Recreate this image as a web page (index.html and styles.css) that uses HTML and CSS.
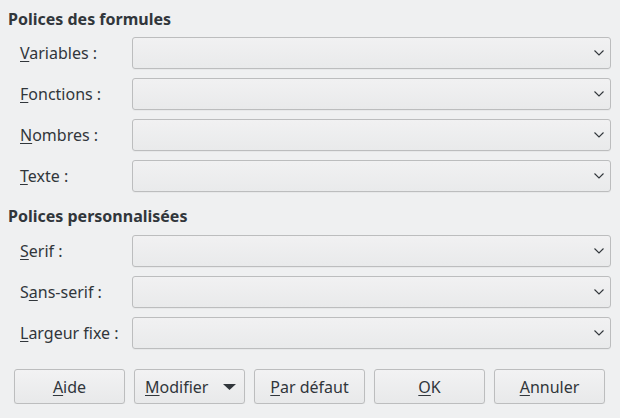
FILE: index.html
```html
<!DOCTYPE html>
<html lang="fr">
<head>
<meta charset="utf-8">
<title>Polices</title>
<link rel="stylesheet" href="styles.css">
</head>
<body>
<div class="dialog">
  <section class="section">
    <h2 class="heading">Polices des formules</h2>
    <div class="rows">
      <label class="label"><u>V</u>ariables :</label>
      <div class="combo"><svg class="chev" width="10" height="6" viewBox="0 0 10 6"><polyline points="0.5,0.5 5,5 9.5,0.5" fill="none" stroke="#31363b" stroke-width="1.1"/></svg></div>
      <label class="label"><u>F</u>onctions :</label>
      <div class="combo"><svg class="chev" width="10" height="6" viewBox="0 0 10 6"><polyline points="0.5,0.5 5,5 9.5,0.5" fill="none" stroke="#31363b" stroke-width="1.1"/></svg></div>
      <label class="label"><u>N</u>ombres :</label>
      <div class="combo"><svg class="chev" width="10" height="6" viewBox="0 0 10 6"><polyline points="0.5,0.5 5,5 9.5,0.5" fill="none" stroke="#31363b" stroke-width="1.1"/></svg></div>
      <label class="label"><u>T</u>exte :</label>
      <div class="combo"><svg class="chev" width="10" height="6" viewBox="0 0 10 6"><polyline points="0.5,0.5 5,5 9.5,0.5" fill="none" stroke="#31363b" stroke-width="1.1"/></svg></div>
    </div>
  </section>
  <section class="section section-second">
    <h2 class="heading">Polices personnalisées</h2>
    <div class="rows">
      <label class="label"><u>S</u>erif :</label>
      <div class="combo"><svg class="chev" width="10" height="6" viewBox="0 0 10 6"><polyline points="0.5,0.5 5,5 9.5,0.5" fill="none" stroke="#31363b" stroke-width="1.1"/></svg></div>
      <label class="label">S<u>a</u>ns-serif :</label>
      <div class="combo"><svg class="chev" width="10" height="6" viewBox="0 0 10 6"><polyline points="0.5,0.5 5,5 9.5,0.5" fill="none" stroke="#31363b" stroke-width="1.1"/></svg></div>
      <label class="label"><u>L</u>argeur fixe :</label>
      <div class="combo"><svg class="chev" width="10" height="6" viewBox="0 0 10 6"><polyline points="0.5,0.5 5,5 9.5,0.5" fill="none" stroke="#31363b" stroke-width="1.1"/></svg></div>
    </div>
  </section>
  <div class="buttons">
    <button class="btn"><u>A</u>ide</button>
    <button class="btn btn-menu"><span><u>M</u>odifier</span><svg class="tri" width="13" height="6" viewBox="0 0 13 6"><polygon points="0,0 13,0 6.5,6" fill="#31363b"/></svg></button>
    <button class="btn"><u>P</u>ar défaut</button>
    <button class="btn"><u>O</u>K</button>
    <button class="btn"><u>A</u>nnuler</button>
  </div>
</div>
</body>
</html>
```

FILE: styles.css
```css
html, body {
  margin: 0;
  padding: 0;
  background: #eff0f1;
}

body {
  font-family: "Noto Sans", "Open Sans", sans-serif;
  font-size: 16px;
  color: #31363b;
}

.dialog {
  padding: 8px 9px 0 8px;
}

.heading {
  margin: 0 0 7px 0;
  font-size: 16px;
  font-weight: bold;
  line-height: 22px;
}

.section-second {
  margin-top: 13px;
}

.section-second .heading {
  margin-bottom: 8px;
}

.rows {
  display: grid;
  grid-template-columns: 112px 1fr;
  row-gap: 9px;
  padding-left: 12px;
  align-items: center;
}

.label {
  line-height: 22px;
  white-space: nowrap;
}

u {
  text-decoration-thickness: 1px;
  text-underline-offset: 2px;
}

.combo {
  box-sizing: border-box;
  height: 32px;
  border: 1px solid #bcbdbe;
  border-radius: 3px;
  background: linear-gradient(#f1f1f2, #e9eaeb);
  display: flex;
  align-items: center;
  justify-content: flex-end;
  padding-right: 6px;
  box-shadow: 0 1px 0 rgba(0, 0, 0, 0.03);
}

.chev {
  display: block;
}

.buttons {
  display: flex;
  gap: 9px;
  padding-left: 6px;
  margin-top: 20px;
}

.btn {
  box-sizing: border-box;
  width: 111px;
  height: 35px;
  border: 1px solid #bcbdbe;
  border-radius: 3px;
  background: linear-gradient(#f2f2f3, #e8e9ea);
  font-family: "Noto Sans", "Open Sans", sans-serif;
  font-size: 16px;
  color: #31363b;
  padding: 0;
  display: flex;
  align-items: center;
  justify-content: center;
  box-shadow: 0 1px 1px rgba(0, 0, 0, 0.06);
}

.btn-menu {
  justify-content: space-between;
  padding: 0 8px 0 10px;
}

.tri {
  display: block;
}
```
